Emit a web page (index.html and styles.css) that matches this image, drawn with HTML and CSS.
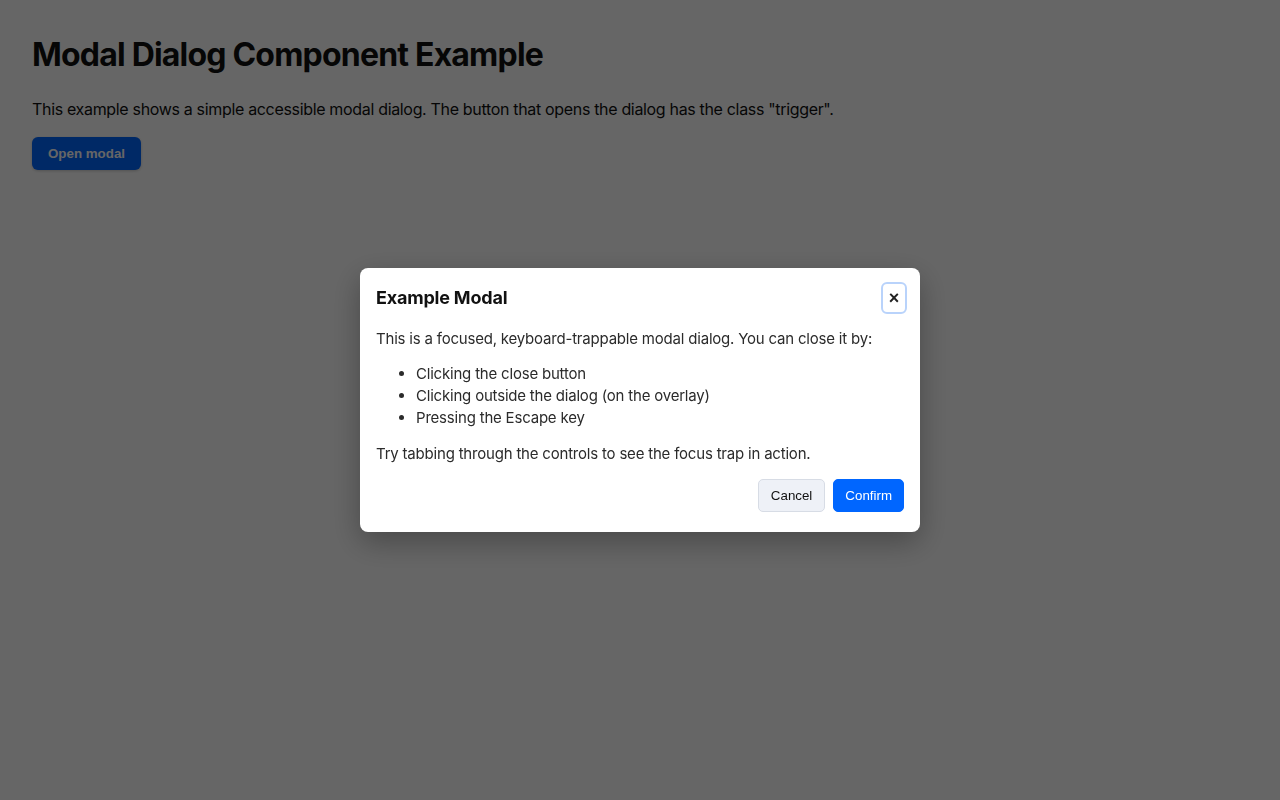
FILE: index.html
```html
<!DOCTYPE html>
<html lang="en">
<head>
<meta charset="utf-8">
<title>Modal Dialog Component Example</title>
<link rel="stylesheet" href="styles.css">
</head>
<body>
<main class="page">
  <h1 class="title">Modal Dialog Component Example</h1>
  <p class="intro">This example shows a simple accessible modal dialog. The button that opens the dialog has the class "trigger".</p>
  <button class="trigger">Open modal</button>
</main>
<div class="overlay">
  <div class="modal" role="dialog" aria-modal="true" aria-labelledby="modal-title">
    <div class="modal-header">
      <h2 id="modal-title" class="modal-title">Example Modal</h2>
      <button class="close" aria-label="Close">×</button>
    </div>
    <div class="modal-body">
      <p>This is a focused, keyboard-trappable modal dialog. You can close it by:</p>
      <ul class="list">
        <li>Clicking the close button</li>
        <li>Clicking outside the dialog (on the overlay)</li>
        <li>Pressing the Escape key</li>
      </ul>
      <p>Try tabbing through the controls to see the focus trap in action.</p>
    </div>
    <div class="modal-footer">
      <button class="btn btn-secondary">Cancel</button>
      <button class="btn btn-primary">Confirm</button>
    </div>
  </div>
</div>
</body>
</html>
```
FILE: styles.css
```css
html, body {
  margin: 0;
  padding: 0;
  height: 100%;
}
body {
  font-family: Inter, "Noto Sans", sans-serif;
  color: #111;
  background: #fff;
}
.page {
  padding: 32px;
}
.title {
  font-size: 32px;
  font-weight: 700;
  letter-spacing: -0.8px;
  margin: 4px 0 0 0;
  line-height: 1.2;
}
.intro {
  font-size: 16px;
  letter-spacing: -0.33px;
  margin: 23px 0 16px 0;
  line-height: 1.5;
}
.trigger {
  font-family: "Liberation Sans", Arial, sans-serif;
  font-weight: 700;
  font-size: 13.333px;
  color: #fff;
  background: #0066ff;
  border: none;
  border-radius: 6px;
  padding: 0 16px;
  height: 33px;
  box-shadow: 0 1px 3px rgba(0,0,0,0.2);
}
.overlay {
  position: fixed;
  inset: 0;
  background: rgba(0,0,0,0.6);
  display: flex;
  align-items: center;
  justify-content: center;
}
.modal {
  width: 560px;
  box-sizing: border-box;
  background: #fff;
  border-radius: 8px;
  padding: 15px 16px 20px 16px;
  box-shadow: 0 10px 30px rgba(0,0,0,0.3);
  color: #2b2b2b;
}
.modal-header {
  display: flex;
  align-items: center;
  justify-content: space-between;
}
.modal-title {
  margin: 0;
  font-size: 18px;
  font-weight: 700;
  letter-spacing: -0.2px;
  color: #111;
}
.close {
  width: 24px;
  height: 30px;
  padding: 0;
  border: none;
  background: #fff;
  font-family: "Liberation Sans", Arial, sans-serif;
  font-size: 18px;
  font-weight: 700;
  line-height: 1;
  color: #222;
  border-radius: 5px;
  outline: 2px solid #b9d3fb;
  outline-offset: -1px;
  margin-right: -2px;
}
.modal-body {
  font-size: 15px;
  line-height: 1.45;
  letter-spacing: -0.2px;
}
.modal-body p {
  margin: 14px 0;
}
.modal-body p:first-child {
  margin-top: 15px;
}
.modal-body p:last-child {
  margin-bottom: 15px;
}
.list {
  margin: 14px 0;
  padding-left: 40px;
}
.modal-footer {
  display: flex;
  justify-content: flex-end;
  gap: 8px;
}
.btn {
  font-family: "Liberation Sans", Arial, sans-serif;
  font-size: 13.333px;
  height: 33px;
  padding: 0 12px;
  border-radius: 5px;
}
.btn-secondary {
  background: #eef1f7;
  border: 1px solid #d7dce5;
  color: #111;
}
.btn-primary {
  background: #0066ff;
  border: 1px solid #0066ff;
  color: #fff;
  padding: 0 11px;
}
```
